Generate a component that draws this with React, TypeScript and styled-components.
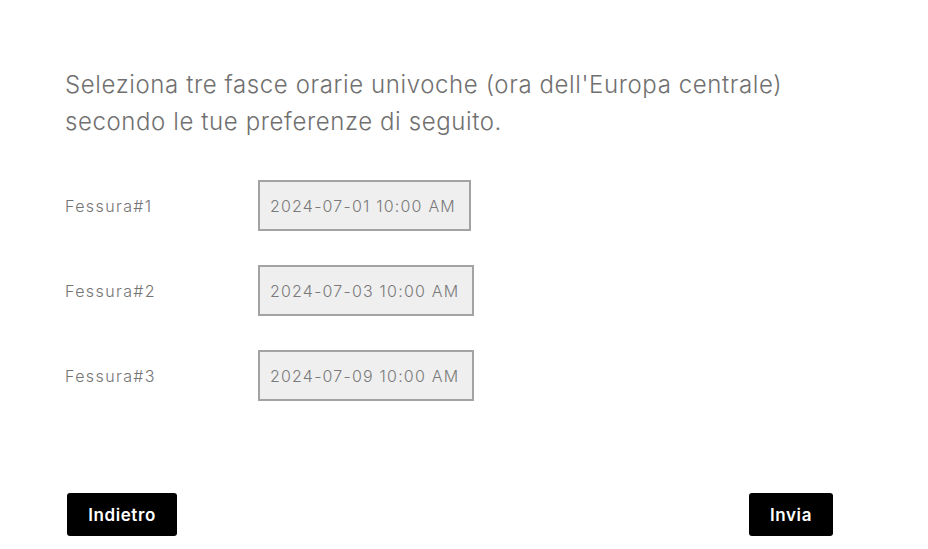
import React from "react";
import styled, { createGlobalStyle } from "styled-components";

const GlobalStyle = createGlobalStyle`
  html, body {
    margin: 0;
    padding: 0;
    background: #fff;
  }
  body {
    font-family: Inter, "Noto Sans", sans-serif;
  }
`;

const Page = styled.div`
  display: flex;
  flex-direction: column;
  padding: 66px 95px 0 65px;
  color: #666;
`;

const Intro = styled.p`
  margin: 0 0 40px 0;
  font-size: 24px;
  font-weight: 300;
  line-height: 37px;
  letter-spacing: 0.6px;
  color: #707070;
  max-width: 740px;
`;

const SlotList = styled.div`
  display: flex;
  flex-direction: column;
  gap: 34px;
`;

const SlotRow = styled.div`
  display: flex;
  align-items: center;
`;

const SlotLabel = styled.span`
  width: 193px;
  font-size: 16px;
  font-weight: 300;
  letter-spacing: 1.4px;
  color: #747474;
`;

const SlotValue = styled.div`
  box-sizing: border-box;
  height: 51px;
  display: flex;
  align-items: center;
  padding: 0 13px 0 10px;
  border: 2px solid #a3a3a3;
  background: #efefef;
  font-size: 16px;
  font-weight: 300;
  color: #7a7a7a;
  letter-spacing: 1.2px;
`;

const Actions = styled.div`
  display: flex;
  justify-content: space-between;
  margin-top: 92px;
  padding-left: 2px;
`;

const ActionButton = styled.button<{ $wide?: boolean }>`
  height: 43px;
  width: ${(p) => (p.$wide ? "110px" : "84px")};
  border: none;
  border-radius: 3px;
  background: #000;
  color: #fff;
  font-family: Inter, "Noto Sans", sans-serif;
  font-size: 17px;
  font-weight: 600;
  letter-spacing: 0.6px;
  cursor: pointer;
`;

const slots = [
  { label: "Fessura#1", value: "2024-07-01 10:00 AM" },
  { label: "Fessura#2", value: "2024-07-03 10:00 AM" },
  { label: "Fessura#3", value: "2024-07-09 10:00 AM" },
];

export default function App() {
  return (
    <>
      <GlobalStyle />
      <Page>
        <Intro>
          Seleziona tre fasce orarie univoche (ora dell'Europa centrale)
          secondo le tue preferenze di seguito.
        </Intro>
        <SlotList>
          {slots.map((s) => (
            <SlotRow key={s.label}>
              <SlotLabel>{s.label}</SlotLabel>
              <SlotValue>{s.value}</SlotValue>
            </SlotRow>
          ))}
        </SlotList>
        <Actions>
          <ActionButton $wide>Indietro</ActionButton>
          <ActionButton>Invia</ActionButton>
        </Actions>
      </Page>
    </>
  );
}
